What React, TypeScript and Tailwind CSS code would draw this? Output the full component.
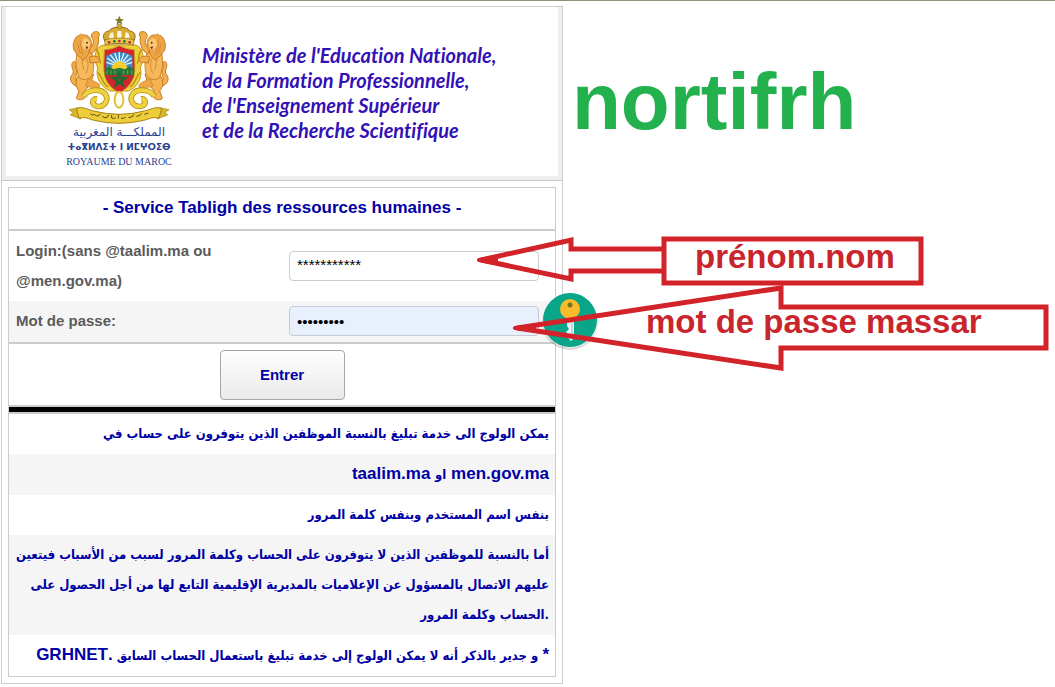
import React from 'react';

function Lion() {
  return (
    <g>
      {/* tail */}
      <path d="M78 232 C58 226 54 206 64 196 C72 186 60 178 63 164 C66 154 77 157 73 166 C70 176 82 186 76 198 C70 208 74 218 84 220" fill="#f2b04c" stroke="#c9781f" strokeWidth="3" />
      {/* hind legs */}
      <path d="M84 196 C70 214 74 234 84 246 L76 268 C84 276 100 272 104 262 L102 244 L118 226 L128 196 Z" fill="#f4b451" stroke="#c9781f" strokeWidth="3" />
      <path d="M112 208 L140 222 C150 228 148 240 136 238 L104 232 Z" fill="#efa743" stroke="#c9781f" strokeWidth="2" />
      {/* torso */}
      <path d="M82 122 C70 150 76 180 84 206 C100 218 122 210 126 190 C130 166 128 146 120 128 Z" fill="#f5b95c" stroke="#cf8228" strokeWidth="3" />
      <path d="M106 146 C114 162 112 180 104 194 M94 146 C92 160 96 172 98 182" fill="none" stroke="#d88d34" strokeWidth="3" />
      {/* front paws */}
      <path d="M112 118 C128 112 130 98 124 88 C118 78 124 68 134 68 C144 66 148 76 142 84 C144 100 142 120 120 136 Z" fill="#f2ae4b" stroke="#c9781f" strokeWidth="3" />
      <path d="M114 144 C126 140 138 140 144 148 C150 156 140 164 132 160 L118 162 Z" fill="#f2ae4b" stroke="#c9781f" strokeWidth="3" />
      {/* mane and face */}
      <path d="M70 96 C72 82 86 76 96 78 C108 76 118 84 120 96 C124 108 120 118 114 124 C116 136 104 148 96 154 C92 144 80 144 76 132 C66 124 64 106 70 96 Z" fill="#eda445" stroke="#cc7a24" strokeWidth="3" />
      <path d="M98 88 C108 86 118 94 118 104 L112 122 C102 126 94 116 92 106 Z" fill="#f8c877" />
      <path d="M80 104 C84 114 82 122 88 132 M88 94 C86 108 92 118 96 138" fill="none" stroke="#d98a31" strokeWidth="3" />
      <path d="M104 112 L112 114 L107 122 Z" fill="#542c12" />
      <circle cx="108" cy="101" r="3" fill="#61340f" />
      <path d="M84 80 L90 72 L97 80 Z" fill="#eda445" />
    </g>
  );
}

function CoatOfArms() {
  return (
    <svg viewBox="48 18 315 330" className="h-[110px] w-[105px]" aria-hidden="true">
      {/* yellow lambrequins */}
      <path d="M158 108 C130 112 126 150 140 176 C132 208 152 236 178 246 L232 246 C258 236 276 208 268 176 C282 150 278 112 252 108 Z" fill="#ecd03c" stroke="#c39a1c" strokeWidth="3" />
      <path d="M134 122 C150 130 140 150 150 164 M274 122 C258 130 268 150 258 164 M140 190 C156 200 150 222 172 234 M268 190 C252 200 258 222 236 234" fill="none" stroke="#b99016" strokeWidth="4" />
      <Lion />
      <g transform="matrix(-1 0 0 1 410 0)">
        <Lion />
      </g>

      {/* shield */}
      <path d="M160 122 Q182 122 205 110 Q228 122 250 122 L252 172 C252 216 232 238 205 252 C178 238 158 216 158 172 Z" fill="#d8232d" stroke="#c7a62a" strokeWidth="3" />
      <path d="M166 140 Q186 130 205 128 Q226 130 244 140 L244 182 L166 182 Z" fill="#3a8fc8" />
      <g stroke="#e6f3fa" strokeWidth="4">
        <path d="M205 172 V130 M205 172 L191 132 M205 172 L219 132 M205 172 L178 137 M205 172 L232 137 M205 172 L168 147 M205 172 L242 147 M205 172 L166 160 M205 172 L244 160" />
      </g>
      <path d="M180 184 A25 27 0 0 1 230 184 Z" fill="#f5cd2e" />
      <path d="M161 182 L174 172 L188 181 L205 176 L222 181 L236 172 L250 182 L249 198 L161 198 Z" fill="#24763a" />
      <path d="M168 184 V196 M180 184 V196 M192 184 V196 M205 182 V196 M218 184 V196 M230 184 V196 M242 184 V196" stroke="#9fbf53" strokeWidth="2" />
      <path d="M161 198 H250 C246 208 243 214 240 218 H170 C166 212 163 206 161 198 Z" fill="#c92b2d" />
      <path d="M205 192 L216 229 L185 206 H225 L194 229 Z" fill="none" stroke="#1c6b34" strokeWidth="6" />

      {/* crown */}
      <path d="M166 104 C152 84 156 68 174 66 C182 50 228 50 236 66 C254 68 258 84 244 104 Z" fill="#d9ad32" stroke="#8b6a1c" strokeWidth="3" />
      <path d="M176 92 C172 78 178 70 186 70 L190 92 Z M234 92 C238 78 232 70 224 70 L220 92 Z M198 92 L199 66 H211 L212 92 Z" fill="#fbf4d6" />
      <path d="M162 92 Q205 82 248 92 V108 Q205 98 162 108 Z" fill="#e9c64a" stroke="#8b6a1c" strokeWidth="2" />
      <circle cx="174" cy="100" r="4" fill="#c2262e" />
      <circle cx="190" cy="97" r="4" fill="#26733b" />
      <circle cx="205" cy="96" r="4" fill="#c2262e" />
      <circle cx="220" cy="97" r="4" fill="#26733b" />
      <circle cx="236" cy="100" r="4" fill="#c2262e" />
      <circle cx="205" cy="52" r="7" fill="#d9ad32" stroke="#8b6a1c" strokeWidth="2" />
      <path d="M205 20 L209 30 L219 31 L211 37 L214 47 L205 41 L196 47 L199 37 L191 31 L201 30 Z" fill="#7b7a2a" />

      {/* scrolls under the shield */}
      <path d="M98 262 C112 238 150 240 162 254 C176 272 160 296 138 292 C120 288 122 268 138 270" fill="none" stroke="#b78f17" strokeWidth="17" />
      <path d="M98 262 C112 238 150 240 162 254 C176 272 160 296 138 292 C120 288 122 268 138 270" fill="none" stroke="#eed23f" strokeWidth="12" />
      <path d="M310 262 C296 238 258 240 246 254 C232 272 248 296 270 292 C288 288 286 268 270 270" fill="none" stroke="#b78f17" strokeWidth="17" />
      <path d="M310 262 C296 238 258 240 246 254 C232 272 248 296 270 292 C288 288 286 268 270 270" fill="none" stroke="#eed23f" strokeWidth="12" />
      <ellipse cx="204" cy="272" rx="13" ry="24" fill="#fffdf0" stroke="#dfc13a" strokeWidth="6" />

      {/* ribbon with motto */}
      <path d="M54 302 L82 296 L90 330 L58 318 L66 310 Z M354 302 L326 296 L318 330 L350 318 L342 310 Z" fill="#d8b52b" stroke="#a8800f" strokeWidth="2" />
      <path d="M76 298 C98 292 108 302 128 306 Q204 326 280 306 C300 302 310 292 332 298 L324 328 C306 322 296 330 278 334 Q204 352 130 334 C112 330 102 322 84 328 Z" fill="#eccd3a" stroke="#a8800f" strokeWidth="3" />
      <path d="M118 314 q6 8 12 2 q6 8 14 4 l4 -6 M154 322 q8 8 16 2 l3 -7 M182 318 v9 q6 4 12 -1 M202 317 v11 M210 328 q8 2 14 -4 M232 325 q8 2 14 -4 l2 -5 M256 322 q10 0 16 -8 M280 316 l12 -4" fill="none" stroke="#5c4a12" strokeWidth="3" />
    </svg>
  );
}

function KeyBadge() {
  return (
    <svg viewBox="0 0 60 62" className="absolute top-[289px] left-[540px] w-[60px]" aria-hidden="true">
      <circle cx="30" cy="32" r="28" fill="#000" opacity="0.15" />
      <circle cx="30" cy="30" r="28" fill="#fff" opacity="0.5" />
      <circle cx="30" cy="30" r="27" fill="#09a588" />
      <path d="M27 28 H34 V48 L31 51 L27 47 L29 45 L26 42 L29 39 L27 36 Z" fill="#e8f7f3" />
      <path d="M32 28 V48" stroke="#9fb9b5" strokeWidth="1" />
      <circle cx="30" cy="19" r="10" fill="#fbbc2c" />
      <circle cx="30" cy="15" r="2.5" fill="#6f7a1d" />
    </svg>
  );
}

function Annotations() {
  return (
    <div className="pointer-events-none absolute -top-px left-0 font-['Liberation_Sans',sans-serif] text-[33px] leading-10 font-bold whitespace-nowrap text-[#c9252d]">
      <svg viewBox="0 0 1055 400" className="h-[400px] w-[1055px]" fill="none" stroke="#d2232a" strokeWidth="5" aria-hidden="true">
        <path d="M664 249 H571 V240 L481 260 L571 279 V271 H664" />
        <rect x="664" y="239" width="257" height="44" />
        <path d="M517 328 L781 288 V307 H1046 V348 H781 V368 Z" />
        <path d="M479 260 L496 257 V263 Z M515 328 L534 326 V330 Z" fill="#ee1c24" strokeWidth="4" strokeLinejoin="round" />
      </svg>
      <span className="absolute top-[237px] left-[695px]">prénom.nom</span>
      <span className="absolute top-[302px] left-[646px]">mot de passe massar</span>
    </div>
  );
}

function Header() {
  return (
    <header className="border-b border-[#c8c8c8] bg-[#eeeeee] px-1 pb-1">
      <div className="flex h-[169px] items-start bg-white pl-[58px]">
        <div className="flex w-[110px] flex-col items-center pt-2 whitespace-nowrap text-[#2b3f8f]">
          <CoatOfArms />
          <span dir="rtl" className="font-['DejaVu_Sans',sans-serif] text-[12px] leading-[15px]">المملكـــة المغربية</span>
          <span className="font-['DejaVu_Sans',sans-serif] text-[9px] leading-[14px] font-bold">ⵜⴰⴳⵍⴷⵉⵜ ⵏ ⵍⵎⵖⵔⵉⴱ</span>
          <span className="font-['Liberation_Serif',serif] text-[10px] leading-[16px]">ROYAUME DU MAROC</span>
        </div>
        <p className="pt-9 pl-7 font-['Lato',sans-serif] text-[20px] leading-[25px] font-bold whitespace-nowrap text-[#3311b5] italic [font-variant-ligatures:none]">
          Ministère de l'Education Nationale,
          <br />
          de la Formation Professionnelle,
          <br />
          de l'Enseignement Supérieur
          <br />
          et de la Recherche Scientifique
        </p>
      </div>
    </header>
  );
}

function LoginForm() {
  return (
    <form className="text-[15px] font-bold">
      <div className="grid grid-cols-2 items-center py-[5px]">
        <label htmlFor="login" className="pl-[7px] leading-[30px] text-[#5b5b5b]">
          Login:(sans @taalim.ma ou @men.gov.ma)
        </label>
        <div className="px-[7px]">
          <input id="login" type="text" defaultValue="***********" className="h-[30px] w-full max-w-[250px] rounded-[4px] border border-[#cccccc] bg-white px-[7px] pb-1 font-normal text-black" />
        </div>
      </div>
      <div className="grid grid-cols-2 items-center border-b-2 border-[#cccccc] bg-[#f5f5f5] pt-[5px] pb-[6px]">
        <label htmlFor="password" className="pl-[7px] leading-[30px] text-[#5b5b5b]">
          Mot de passe:
        </label>
        <div className="px-[7px]">
          <input id="password" type="password" defaultValue="123456789" className="h-[30px] w-full max-w-[250px] rounded-[4px] border border-[#c5cad3] bg-[#e8f0fe] px-[7px] font-normal text-black" />
        </div>
      </div>
      <div className="flex justify-center border-b-2 border-[#cccccc] pt-[6px] pb-[5px]">
        <button type="button" className="h-[50px] w-[125px] rounded-[4px] border border-[#a6a6a6] bg-gradient-to-b from-white to-[#eaeaea] text-[#0000a4]">
          Entrer
        </button>
      </div>
    </form>
  );
}

function Latin({ children }: { children: React.ReactNode }) {
  return <span className="font-['Liberation_Sans',sans-serif] text-[17px]">{children}</span>;
}

function Notices() {
  return (
    <div className="text-right font-['DejaVu_Sans_Condensed','DejaVu_Sans',sans-serif] text-[13px] leading-[30px] font-bold text-[#0000a4]">
      <p dir="rtl" className="px-[6px] py-[5px]">
        يمكن الولوج الى خدمة تبليغ بالنسبة الموظفين الذين يتوفرون على حساب في
      </p>
      <p className="bg-[#f5f5f5] px-[6px] py-[5px]">
        <Latin>taalim.ma </Latin>او<Latin> men.gov.ma</Latin>
      </p>
      <p dir="rtl" className="px-[6px] py-[5px]">
        بنفس اسم المستخدم وبنفس كلمة المرور
      </p>
      <p className="bg-[#f5f5f5] px-[6px] py-[5px]">
        أما بالنسبة للموظفين الذين لا يتوفرون على الحساب وكلمة المرور لسبب من الأسباب فيتعين
        <br />
        عليهم الاتصال بالمسؤول عن الإعلاميات بالمديرية الإقليمية التابع لها من أجل الحصول على
        <br />
        الحساب وكلمة المرور.
      </p>
      <p dir="rtl" className="px-[6px] py-[5px]">
        <Latin>*</Latin> و جدير بالذكر أنه لا يمكن الولوج إلى خدمة تبليغ باستعمال الحساب السابق <Latin>.GRHNET</Latin>
      </p>
    </div>
  );
}

export default function App() {
  return (
    <div className="relative min-h-screen overflow-hidden border-t border-[#8c9470] bg-white font-['Liberation_Sans',sans-serif]">
      <div className="flex items-start pt-[5px] pl-px">
        <main className="w-full max-w-[562px] border border-[#cccccc]">
          <Header />
          <section className="mx-[6px] my-[6px] border border-[#cccccc]">
            <h1 className="border-b-2 border-[#cccccc] pt-[5px] pb-[6px] text-center text-[17px] leading-[30px] font-bold text-[#0000a4]">
              - Service Tabligh des ressources humaines -
            </h1>
            <LoginForm />
            <hr className="h-[7px] border-0 border-b-2 border-[#cccccc] bg-black" />
            <Notices />
          </section>
        </main>
        <h2 className="pt-[50px] pl-[9px] text-[80px] leading-[92px] font-bold text-[#22b14c]">nortifrh</h2>
      </div>
      <KeyBadge />
      <Annotations />
    </div>
  );
}
